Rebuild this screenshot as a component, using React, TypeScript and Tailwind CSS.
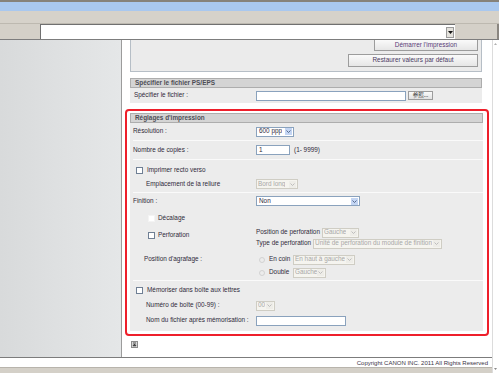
import React from 'react';

const FONT = "font-['Liberation_Sans',Arial,sans-serif]";

// Canon remote UI style print settings page (scaled down screenshot)
export default function App() {
  return (
    <div className={`h-[374px] w-[499px] overflow-hidden bg-white text-[6.4px] leading-none text-[#2f2a3a] ${FONT}`}>
      <div className="h-[2px] bg-[#86827a]" />
      <div className="h-[9px] bg-[#a9c8ef]" />
      <div className="h-[13px] border-b border-[#bdb9b0] bg-[#d6d2ca]" />
      <AddressRow />
      <div className="flex h-[333px]">
        <div className="flex flex-1 flex-col">
          <div className="flex h-[317px]">
            <div className="w-[121px] bg-gradient-to-r from-[#d8dadb] to-[#e5e7e8]" />
            <div className="w-px bg-[#9c9c9c]" />
            <Content />
          </div>
          <Footer />
        </div>
        <ScrollStrip />
      </div>
    </div>
  );
}

function AddressRow() {
  return (
    <div className="flex h-[16px] border-b border-[#7d7d7d] bg-[#d4d0c8]">
      <div className="w-[40px]" />
      <div className="flex w-[415px] items-center justify-end border-t border-l border-[#707070] bg-white pr-[1px]">
        <div className="flex h-[11px] w-[8px] items-center justify-center border border-[#9a9a9a] bg-[#e4e2dc]">
          <svg width="5" height="3" viewBox="0 0 5 3">
            <path d="M0 0h5L2.5 3z" fill="#111" />
          </svg>
        </div>
      </div>
      <div className="flex-1" />
      <div className="w-[2px] bg-[#8a8680]" />
    </div>
  );
}

function Content() {
  return (
    <div className="flex flex-1 flex-col overflow-hidden">
      {/* top box with action buttons, cut by scrolling */}
      <div className="mr-[10px] ml-[8px] flex h-[32px] flex-col items-end gap-[3px] border-x border-b border-[#b6bec6] bg-[#ebebeb] pr-[3px]">
        <button className="flex h-[11px] w-[104px] items-center justify-center border-x border-b border-[#9c9c9c] bg-gradient-to-b from-[#fafafa] to-[#e6e6e6] text-[#5a3c78]">
          Démarrer l'impression
        </button>
        <button className="flex h-[13px] w-[130px] items-center justify-center border border-[#9c9c9c] bg-gradient-to-b from-[#fafafa] to-[#e6e6e6] text-[#4a3a5e]">
          Restaurer valeurs par défaut
        </button>
      </div>

      {/* PS/EPS file */}
      <div className="mt-[6px] mr-[10px] ml-[8px]">
        <Header title="Spécifier le fichier PS/EPS" />
        <div className="grid h-[15px] grid-cols-[122px_1fr] items-center bg-[#ececec] pl-[4px]">
          <span>Spécifier le fichier :</span>
          <div className="flex items-center gap-[2px]">
            <Input w="w-[150px]" />
            <button className="flex h-[9px] w-[25px] items-center justify-center border border-[#9c9c9c] bg-gradient-to-b from-[#fafafa] to-[#e2e2e2] font-['Noto_Sans_CJK_JP',sans-serif] text-[5.5px] text-[#333]">
              参照...
            </button>
          </div>
        </div>
      </div>

      {/* Print settings, highlighted */}
      <div className="mx-[3px] mt-[6px] h-[227px] rounded-[4px] border-2 border-[#ee1f2b] pt-[2px] pr-[4px] pb-[3px] pl-[3px]">
        <Header title="Réglages d'impression" />
        <div className="bg-[#ececec] pl-[3px]">
          <Row h="h-[17px]" label="Résolution :">
            <Select w="w-[38px]" value="600 ppp" />
          </Row>
          <Sep />
          <Row h="h-[18px]" label="Nombre de copies :">
            <div className="flex items-center gap-[4px]">
              <Input w="w-[34px]" value="1" />
              <span>(1- 9999)</span>
            </div>
          </Row>
          <Sep />
          <div className="pt-[3px] pb-[1px]">
            <div className="flex h-[14px] items-center pl-[3px]">
              <Check />
              <span className="ml-[4px]">Imprimer recto verso</span>
            </div>
            <Row h="h-[14px]" label="Emplacement de la reliure" indent="pl-[13px]">
              <Select w="w-[42px]" value="Bord long" disabled />
            </Row>
          </div>
          <Sep />
          <div className="pt-[1px] pb-[1px]">
            <Row h="h-[14px]" label="Finition :">
              <Select w="w-[104px]" value="Non" />
            </Row>
            <div className="mt-[3px] flex h-[14px] items-center pl-[15px]">
              <Check light />
              <span className="ml-[3px]">Décalage</span>
            </div>
            <div className="mt-[2px] grid grid-cols-[123px_1fr]">
              <div className="flex h-[16px] items-center pl-[15px]">
                <Check />
                <span className="ml-[3px]">Perforation</span>
              </div>
              <div className="flex flex-col">
                <div className="flex h-[11px] items-center gap-[2px]">
                  <span className="w-[64px] shrink-0 whitespace-nowrap">Position de perforation</span>
                  <Select w="w-[37px]" value="Gauche" disabled />
                </div>
                <div className="flex h-[11px] items-center gap-[2px]">
                  <span className="whitespace-nowrap">Type de perforation</span>
                  <Select w="w-[129px]" value="Unité de perforation du module de finition" disabled />
                </div>
              </div>
            </div>
            <div className="mt-[4px] grid grid-cols-[123px_1fr]">
              <div className="flex h-[13px] items-center pl-[11px]">Position d'agrafage :</div>
              <div className="grid grid-cols-[34px_1fr] pl-[3px]">
                <div className="flex h-[13px] items-center gap-[4px]">
                  <Radio />
                  <span>En coin</span>
                </div>
                <div className="flex items-center">
                  <Select w="w-[62px]" value="En haut à gauche" disabled />
                </div>
                <div className="flex h-[13px] items-center gap-[4px]">
                  <Radio />
                  <span>Double</span>
                </div>
                <div className="flex items-center">
                  <Select w="w-[33px]" value="Gauche" disabled />
                </div>
              </div>
            </div>
          </div>
          <Sep />
          <div className="pt-[2px] pb-[3px]">
            <div className="flex h-[15px] items-center pl-[3px]">
              <Check />
              <span className="ml-[4px]">Mémoriser dans boîte aux lettres</span>
            </div>
            <Row h="h-[15px]" label="Numéro de boîte (00-99) :" indent="pl-[13px]">
              <Select w="w-[19px]" value="00" disabled />
            </Row>
            <Row h="h-[15px]" label="Nom du fichier après mémorisation :" indent="pl-[13px]">
              <Input w="w-[90px]" />
            </Row>
          </div>
        </div>
      </div>

      <div className="mt-[5px] ml-[9px]">
        <svg width="7" height="7" viewBox="0 0 7 7">
          <rect x="0.5" y="0.5" width="6" height="6" fill="#d8d8d8" stroke="#8c8c8c" />
          <path d="M2 2h3M3.5 3L2 4.8h3z" stroke="#333" strokeWidth="0.8" fill="#333" />
        </svg>
      </div>
    </div>
  );
}

function Header({ title }: { title: string }) {
  return (
    <div className="flex h-[10px] items-center border border-[#adadad] bg-[#d4d4d4] pl-[4px] font-bold text-[#4d4d55]">
      {title}
    </div>
  );
}

function Row({
  h,
  label,
  indent = '',
  children,
}: {
  h: string;
  label: string;
  indent?: string;
  children: React.ReactNode;
}) {
  return (
    <div className={`grid ${h} grid-cols-[123px_1fr] items-center`}>
      <span className={`whitespace-nowrap ${indent}`}>{label}</span>
      <div className="flex items-center">{children}</div>
    </div>
  );
}

function Sep() {
  return <div className="h-px bg-[#fafafa]" />;
}

function Input({ w, value = '' }: { w: string; value?: string }) {
  return (
    <div className={`flex h-[10px] ${w} items-center border border-[#8aa2bd] bg-white pl-[2px]`}>{value}</div>
  );
}

function Select({ w, value, disabled = false }: { w: string; value: string; disabled?: boolean }) {
  return (
    <div
      className={`flex h-[10px] ${w} items-center justify-between border pl-[1px] ${
        disabled ? 'border-[#cfcdc4] bg-[#f5f4ef] text-[#a8a8a8]' : 'border-[#8aa2bd] bg-white pl-[2px]'
      }`}
    >
      <span className="overflow-hidden whitespace-nowrap">{value}</span>
      <div
        className={`mr-px flex h-[7px] w-[7px] shrink-0 items-center justify-center ${
          disabled ? 'bg-[#eeede8]' : 'bg-[#c3d5f3]'
        }`}
      >
        <svg width="5" height="3" viewBox="0 0 5 3">
          <path
            d="M0.5 0.5L2.5 2.5L4.5 0.5"
            fill="none"
            stroke={disabled ? '#b8b8b8' : '#4d6185'}
            strokeWidth="0.9"
          />
        </svg>
      </div>
    </div>
  );
}

function Check({ light = false }: { light?: boolean }) {
  return (
    <div
      className={`h-[7px] w-[7px] shrink-0 border bg-white ${light ? 'border-[#f4f4f4]' : 'border-[#6f7f94]'}`}
    />
  );
}

function Radio() {
  return <div className="h-[6px] w-[6px] shrink-0 rounded-full border border-[#d2d2d2] bg-[#ececec]" />;
}

function Footer() {
  return (
    <div className="flex flex-1 flex-col">
      <div className="h-px bg-[#7c7c7c]" />
      <div className="flex h-[9px] items-center justify-end bg-white pr-[4px] text-[6px] text-[#3a3346]">
        Copyright CANON INC. 2011 All Rights Reserved
      </div>
      <div className="flex-1 border-t border-[#b8b4ac] bg-[#d4d0c8]" />
    </div>
  );
}

function ScrollStrip() {
  return (
    <div className="flex w-[7px] flex-col items-center justify-between border-l border-[#dcdcdc] bg-white py-[3px] pr-[2px]">
      <svg width="3" height="2" viewBox="0 0 3 2">
        <path d="M0 2L1.5 0L3 2z" fill="#b0b0b0" />
      </svg>
      <svg width="3" height="2" viewBox="0 0 3 2">
        <path d="M0 0L1.5 2L3 0z" fill="#8a8a8a" />
      </svg>
    </div>
  );
}
